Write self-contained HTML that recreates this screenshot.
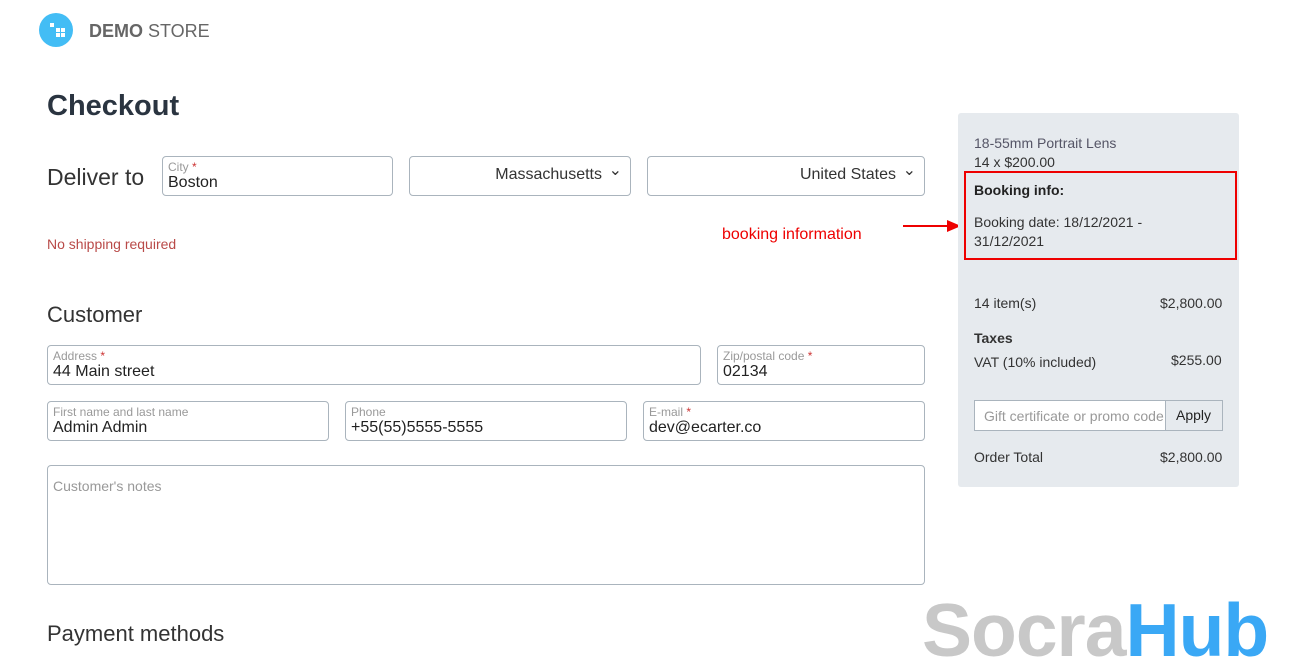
<!DOCTYPE html>
<html><head><style>
*{box-sizing:border-box;margin:0;padding:0}
body{width:1289px;height:664px;overflow:hidden;background:#fff;font-family:"Liberation Sans","DejaVu Sans",sans-serif;color:#333;position:relative}
.a{position:absolute}
.box{position:absolute;border:1px solid #aab4bd;border-radius:4px;background:#fff}
.lbl{position:absolute;left:5px;top:3px;font-size:12px;color:#999}
.lbl b{color:#c33;font-weight:normal}
.val{position:absolute;left:5px;top:17px;font-size:16px;color:#222}
.sel{position:absolute;border:1px solid #aab4bd;border-radius:4px;font-size:16px;color:#333;text-align:right;padding:9px 28px 0 0}
.sel:after{content:"⌄";position:absolute;right:8px;top:3px;font-size:16px}
.sm{font-size:14px;color:#333}
.sq{position:absolute;width:4px;height:4px;background:#fff}
</style></head><body>
<div class="a" style="left:39px;top:13px;width:34px;height:34px;border-radius:50%;background:#43bdf5"></div>
<div class="sq" style="left:50px;top:23px"></div>
<div class="sq" style="left:56px;top:28px"></div>
<div class="sq" style="left:61px;top:28px"></div>
<div class="sq" style="left:56px;top:33px"></div>
<div class="sq" style="left:61px;top:33px"></div>
<div class="a" style="left:89px;top:21px;font-size:18px;color:#666"><b>DEMO</b> STORE</div>
<div class="a" style="left:47px;top:90px;font-size:29px;font-weight:bold;color:#2a3440">Checkout</div>
<div class="a" style="left:47px;top:164px;font-size:23px;color:#333">Deliver to</div>
<div class="box" style="left:162px;top:156px;width:231px;height:40px"><div class="lbl">City <b>*</b></div><div class="val">Boston</div></div>
<div class="sel" style="left:409px;top:156px;width:222px;height:40px">Massachusetts</div>
<div class="sel" style="left:647px;top:156px;width:278px;height:40px">United States</div>
<div class="a" style="left:47px;top:236px;font-size:14px;color:#b94a48">No shipping required</div>
<div class="a" style="left:722px;top:226px;font-size:16px;color:#e00">booking information</div>
<div class="a" style="left:903px;top:225px;width:50px;height:2px;background:#e00"></div>
<div class="a" style="left:947px;top:220px;border-left:14px solid #e00;border-top:6px solid transparent;border-bottom:6px solid transparent"></div>
<div class="a" style="left:47px;top:302px;font-size:22px;color:#333">Customer</div>
<div class="box" style="left:47px;top:345px;width:654px;height:40px"><div class="lbl">Address <b>*</b></div><div class="val">44 Main street</div></div>
<div class="box" style="left:717px;top:345px;width:208px;height:40px"><div class="lbl">Zip/postal code <b>*</b></div><div class="val">02134</div></div>
<div class="box" style="left:47px;top:401px;width:282px;height:40px"><div class="lbl">First name and last name</div><div class="val">Admin Admin</div></div>
<div class="box" style="left:345px;top:401px;width:282px;height:40px"><div class="lbl">Phone</div><div class="val">+55(55)5555-5555</div></div>
<div class="box" style="left:643px;top:401px;width:282px;height:40px"><div class="lbl">E-mail <b>*</b></div><div class="val">dev@ecarter.co</div></div>
<div class="box" style="left:47px;top:465px;width:878px;height:120px"><div class="a" style="left:5px;top:12px;font-size:14px;color:#999">Customer's notes</div></div>
<div class="a" style="left:47px;top:621px;font-size:22px;color:#333">Payment methods</div>
<div class="a" style="left:958px;top:113px;width:281px;height:374px;background:#e6eaee;border-radius:3px"></div>
<div class="a sm" style="left:974px;top:135px;color:#556">18-55mm Portrait Lens</div>
<div class="a sm" style="left:974px;top:154px">14 x $200.00</div>
<div class="a" style="left:964px;top:171px;width:273px;height:89px;border:2px solid #e00"></div>
<div class="a sm" style="left:974px;top:182px;font-weight:bold;color:#222">Booking info:</div>
<div class="a sm" style="left:974px;top:213px;line-height:19px">Booking date: 18/12/2021 -<br>31/12/2021</div>
<div class="a sm" style="left:974px;top:295px">14 item(s)</div>
<div class="a sm" style="left:1160px;top:295px">$2,800.00</div>
<div class="a sm" style="left:974px;top:330px;font-weight:bold">Taxes</div>
<div class="a sm" style="left:974px;top:354px">VAT (10% included)</div>
<div class="a sm" style="left:1171px;top:352px">$255.00</div>
<div class="a" style="left:974px;top:400px;width:249px;height:31px;background:#fff;border:1px solid #aab4bd;overflow:hidden"><div class="a" style="left:9px;top:7px;font-size:14px;color:#999;white-space:nowrap">Gift certificate or promo code</div><div class="a" style="left:190px;top:-1px;width:59px;height:31px;background:#e6eaee;border-left:1px solid #aab4bd;font-size:14px;padding:7px 0 0 10px;color:#222">Apply</div></div>
<div class="a sm" style="left:974px;top:449px">Order Total</div>
<div class="a sm" style="left:1160px;top:449px">$2,800.00</div>
<div class="a" style="left:922px;top:588px;font-size:75px;line-height:84px;font-weight:bold;letter-spacing:-1px;font-family:'Liberation Sans',sans-serif;color:#c8c8c8;white-space:nowrap">Socra<span style="color:#3aa8f5">Hub</span></div>
</body></html>
